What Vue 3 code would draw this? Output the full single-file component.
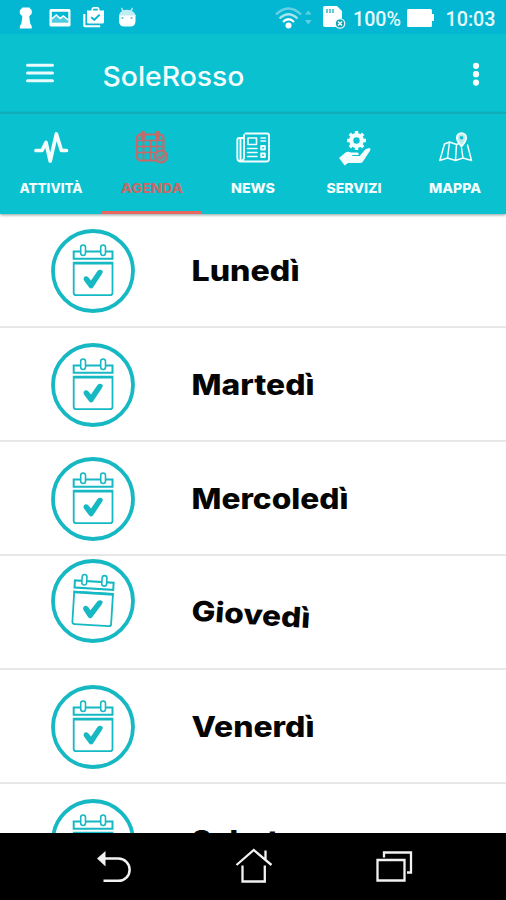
<script setup>
const tabs = [
  { id: 'attivita', label: 'ATTIVITÀ', width: 63 },
  { id: 'agenda', label: 'AGENDA', width: 62 },
  { id: 'news', label: 'NEWS', width: 44 },
  { id: 'servizi', label: 'SERVIZI', width: 55 },
  { id: 'mappa', label: 'MAPPA', width: 52 },
]
const days = [
  { label: 'Lunedì', width: 108 },
  { label: 'Martedì', width: 123 },
  { label: 'Mercoledì', width: 157 },
  { label: 'Giovedì', width: 119, tilted: true },
  { label: 'Venerdì', width: 123 },
  { label: 'Sabato', width: 106 },
]
</script>

<template>
  <div class="screen">
    <header class="status">
      <svg class="status-left" viewBox="0 0 150 34" width="150" height="34">
        <g fill="#fff">
          <path d="M22.500 7.500h7l2.300 3v3l-2.600 3 1 7q1.600 1.500 1.600 5H19.800q0-3.500 1.600-5l1-7-2.600-3v-3Z" />
          <path fill-rule="evenodd" d="M51 9h18q1.500 0 1.500 1.500v14.500q0 1.500-1.500 1.500H51q-1.500 0-1.500-1.500V10.500Q49.500 9 51 9Zm.8 2.700v11h16.500v-11Z" />
          <path d="M51.500 23v-4.500l4.500-4 4 3.500 3-2.500 5.500 4V23Z" opacity=".3" />
          <path d="m51.800 19 4.500-4 4 3.500 3-2.500 5 4" fill="none" stroke="#fff" stroke-width="1.500" />
          <path fill-rule="evenodd" d="M87 10.500h4.500V8.500l1.500-1.500h5l1.500 1.500v2h4.500V22q0 1.500-1.500 1.500H88.500Q87 23.500 87 22Zm6.200 0h4.600V8.800h-4.600Zm-1.500 6-1.200 1.200 3.800 3.500 6-6-1.300-1.200-4.700 4.500Z" />
          <path d="M83.200 14h2.200v11.200h14.800v2H85q-1.800 0-1.800-1.800Z" />
          <path d="M119 15.500h16.500V21q0 5.500-5.500 5.500h-5.500Q119 26.500 119 21Z" />
          <path d="M119 16q.2-3.500 3-5l-1-3 1-.5 1.500 2.800q3.500-1.200 7 0l1.500-2.800 1 .5-1 3q3 1.500 4 5Z" opacity=".75" />
        </g>
        <circle cx="122.500" cy="18" r="1" fill="#43c5dc" />
        <circle cx="131.500" cy="18" r="1" fill="#43c5dc" />
      </svg>
      <svg class="status-right" viewBox="270 0 236 34" width="236" height="34">
        <g fill="none" stroke-width="2.300">
          <path d="M276 14.500q12.500-12 25 0" stroke="#68d0e4" />
          <path d="M279.500 18.500q9-8.500 18 0" stroke="#a9e4ef" />
          <path d="M283 22q5.500-5.500 11 0" stroke="#fff" />
        </g>
        <circle cx="288.500" cy="25.500" r="3" fill="#fff" />
        <path d="M305 14.500l3.300-4 3.300 4Zm0 5.500h6.600l-3.300 4.500Z" fill="#62cfe3" />
        <path d="M325 6h12l5 5v7.500a6 6 0 0 0-5 8.500H325q-2 0-2-2V8q0-2 2-2Z" fill="#fff" />
        <path d="M327 9v4M330 9v4M333 9v4" stroke="#23b4c8" stroke-width="1.400" />
        <circle cx="340" cy="23.500" r="4.700" fill="#0d9fb1" stroke="#e6fafc" stroke-width="1.300" />
        <path d="m338 21.500 4 4m0-4-4 4" stroke="#fff" stroke-width="1.500" />
        <text x="353" y="26" textLength="48" lengthAdjust="spacingAndGlyphs" class="status-text">100%</text>
        <path d="M408.500 9h22q1.500 0 1.500 1.500v3.500h2v7h-2v4.500q0 1.500-1.500 1.500h-22Q407 27 407 25.500v-15Q407 9 408.500 9Z" fill="#fff" />
        <text x="445.500" y="26" textLength="50" lengthAdjust="spacingAndGlyphs" class="status-text">10:03</text>
      </svg>
    </header>

    <div class="appbar">
      <svg class="burger" viewBox="26 61 28 24" width="28" height="24">
        <path d="M27.500 64.300h25M27.500 72h25M27.500 79.700h25" stroke="#e9fbfc" stroke-width="3" stroke-linecap="round" />
      </svg>
      <svg class="title" width="146" height="34" viewBox="0 0 146 34">
        <text x="0.500" y="27" textLength="142" lengthAdjust="spacingAndGlyphs">SoleRosso</text>
      </svg>
      <svg class="more" width="10" height="26" viewBox="0 0 10 26" fill="#fff">
        <circle cx="5" cy="4.800" r="3.100" /><circle cx="5" cy="13.200" r="3.100" /><circle cx="5" cy="21.600" r="3.100" />
      </svg>
    </div>

    <nav class="tabs">
      <div v-for="tab in tabs" :key="tab.id" class="tab" :class="{ active: tab.id === 'agenda' }">
        <svg class="tab-icon" viewBox="0 0 40 40" width="40" height="40" fill="none" stroke="currentColor" stroke-linecap="round" stroke-linejoin="round">
          <path v-if="tab.id === 'attivita'" d="M5 22.500h6l4-8 4.200 18.500 6.200-27 5 16.500H35.500" stroke-width="3.700" />
          <g v-else-if="tab.id === 'agenda'" stroke-width="1.700">
            <rect x="5" y="6.500" width="26.500" height="26" rx="3.500" stroke-width="2.200" />
            <path d="M6 12.500h25M6 18.500h25M6 24.500h18M11.500 12v20M18.300 12v20M25.200 12v12" />
            <path d="M10.800 5v5M25.700 5v5" stroke-width="4.500" />
            <g stroke-width="3"><path d="M11.500 18.500h.1M18.300 18.500h.1M25.200 18.500h.1M11.500 24.500h.1M18.300 24.500h.1" /></g>
            <circle cx="29" cy="28.500" r="6" stroke-width="2" fill="#4aa6aa" />
            <path d="m26.500 29 2.300 1.500 3.400-4" />
          </g>
          <g v-else-if="tab.id === 'news'" stroke-width="1.600">
            <path d="M12.500 5.500h21.500q2 0 2 2v23.500q0 2.500-2.500 2.500H8q-3.700 0-3.700-4V12q0-2 2-2h4M11 7v22q0 4-3.500 4V10" stroke-width="1.900" />
            <path d="M15 10h8.500v6.500H15ZM14.500 20.500h9.500M14.500 24.500h9.500M14.500 28.500h9.500M28 10h4.500M28 13h4.500" />
            <path d="M28.200 18h3.600v3.500h-3.600ZM28.200 25.500h3.600V29h-3.600Z" stroke-width="2" />
          </g>
          <g v-else-if="tab.id === 'servizi'" fill="currentColor" stroke="none">
            <circle cx="22.500" cy="12.500" r="5.300" fill="none" stroke="currentColor" stroke-width="4.200" />
            <path d="M22.500 3v19M13 12.500h19M15.800 5.800l13.400 13.400M29.200 5.800 15.800 19.200" fill="none" stroke="currentColor" stroke-width="3.400" stroke-dasharray="3 12.900 3.100 30" stroke-linecap="butt" />
            <path d="M5 30 11.500 24.500q2.500-1.500 5.500 0h6.500q2.200.8.700 2.500h-6v1h7.500l5.500-6.500 3-1.200h1.800q1.200.8 0 2.500L29 33.500q-1 1.500-3 1.500H14l-3.300 2.500Z" />
          </g>
          <g v-else stroke-width="1.500">
            <path d="M21.500 16.500 14.500 14 9.500 16 4.800 32.500 12.500 30 20.500 32.500 28 30 36.500 32.500 32.500 17M14.500 14 12.500 30M21.500 16.500l-1 16M26.500 20 28 30M21.500 16.500l2.500-1" />
            <path d="M25.800 20.500q-.5-4-3.300-8a4.300 4.300 0 1 1 7 0q-2.200 3.500-3.700 8Z" stroke="none" fill="none" />
            <path d="M26.500 18.500Q21.800 13 21.800 9.800a4.700 4.700 0 0 1 9.400 0q0 3.200-4.700 8.700Z" stroke-width="1.800" fill="#b8ebef" />
            <circle cx="26.500" cy="9.800" r="1.800" fill="#0ac1d0" stroke="none" />
          </g>
        </svg>
        <svg class="tab-label" width="66" height="18" viewBox="0 0 66 18">
          <text :x="33 - tab.width / 2" y="13.500" :textLength="tab.width" lengthAdjust="spacingAndGlyphs">{{ tab.label }}</text>
        </svg>
      </div>
    </nav>

    <main class="list">
      <div v-for="day in days" :key="day.label" class="row" :class="{ tilted: day.tilted }">
        <svg class="day-icon" width="84" height="84" viewBox="0 0 84 84" fill="none" stroke="#16b8c3">
          <circle cx="42" cy="42" r="40" stroke-width="3.800" />
          <g class="calendar">
            <path d="M22.700 22.500h38.800v7.200H22.700Z" stroke-width="2" />
            <rect x="29.700" y="16" width="4.800" height="10.500" rx="2.400" fill="#fff" stroke-width="1.600" />
            <rect x="49.700" y="16" width="4.800" height="10.500" rx="2.400" fill="#fff" stroke-width="1.600" />
            <path d="M22.700 33.700h38.800v30q0 2.500-2.500 2.500H25.200q-2.500 0-2.500-2.500Z" stroke-width="1.800" />
            <path d="M22 34.200h40" stroke-width="2.600" />
            <path d="M33 48.200q2-2 4.500.2l2.500 3L46.500 42q2.500-2.500 5.200 0 .3 1.500-.8 3L42 58.500q-1.800 2-3.800 0L33 51.500q-1-1.600 0-3.300Z" fill="#16b8c3" stroke="none" />
          </g>
        </svg>
        <svg class="day-label" width="170" height="40" viewBox="0 0 170 40">
          <text x="1.500" y="30.300" :textLength="day.width" lengthAdjust="spacingAndGlyphs">{{ day.label }}</text>
        </svg>
      </div>
    </main>

    <footer class="navbar">
      <svg width="40" height="40" viewBox="94 847 40 40" fill="none" stroke="#f2f2f2" stroke-width="2.500">
        <path d="M103 858.500h15.500a11 11 0 0 1 0 22.300h-15" />
        <path d="M97 858.500l8.500-7.500v15.500Z" fill="#f2f2f2" stroke="none" />
      </svg>
      <svg width="40" height="40" viewBox="234 847 40 40" fill="none" stroke="#f2f2f2" stroke-width="2.300">
        <path d="m236.500 865 17.300-15 17.700 15M265.500 850.500v9M242.500 865.500v16h22.300v-16" />
      </svg>
      <svg width="40" height="40" viewBox="374 847 40 40" fill="none" stroke="#f2f2f2" stroke-width="2.300">
        <path d="M377.500 860h27v20.500h-27ZM384 857.500v-5h27v20h-4" />
      </svg>
    </footer>
  </div>
</template>

<style>
body {
  margin: 0;
}
</style>

<style scoped>
.screen {
  width: 506px;
  height: 900px;
  display: flex;
  flex-direction: column;
  overflow: hidden;
  background: #fff;
}
svg {
  display: block;
  flex: none;
}
.status {
  height: 34px;
  flex: none;
  display: flex;
  justify-content: space-between;
  background: #03b7d3;
}
.status-text {
  font: 500 19.500px Roboto, sans-serif;
  fill: #e6fafc;
}
.appbar {
  height: 80px;
  flex: none;
  box-sizing: border-box;
  display: flex;
  align-items: center;
  padding: 0 25px 0 26px;
  background: linear-gradient(#0ac1d0 77px, #04a9b7 79px, #06b4c1);
}
.title {
  margin-left: 48px;
  margin-top: 3px;
}
.title text {
  font: 500 27px Inter, sans-serif;
  fill: #f3fdfd;
}
.more {
  margin-left: auto;
}
.tabs {
  height: 100px;
  flex: none;
  display: flex;
  background: #0ac1d0;
  color: #f3fdfd;
  box-shadow: 0 1px 3px #8b9c9e;
  z-index: 1;
}
.tab {
  flex: 1;
  box-sizing: border-box;
  display: flex;
  flex-direction: column;
  align-items: center;
  padding-top: 14px;
  border-bottom: 3px solid transparent;
}
.tab.active {
  color: #c66a69;
  border-bottom-color: #e76761;
}
.tab-label {
  margin-top: 11px;
}
.tab-label text {
  font: 800 13.500px Inter, sans-serif;
  fill: currentColor;
}
.list {
  flex: 1;
  min-height: 0;
  overflow: hidden;
}
.row {
  height: 114px;
  box-sizing: border-box;
  display: flex;
  align-items: center;
  padding: 1px 0 0 51px;
  border-bottom: 2px solid #e7e7e7;
}
.day-label {
  margin-left: 55px;
}
.day-label text {
  font: 800 28px Inter, sans-serif;
  fill: #050505;
}
.tilted .day-icon {
  margin-bottom: 24px;
}
.tilted .calendar {
  transform: rotate(3.500deg);
  transform-origin: 42px 42px;
}
.tilted .day-label {
  transform: rotate(3.700deg);
  transform-origin: 46px 20px;
}
.navbar {
  height: 67px;
  flex: none;
  display: flex;
  align-items: center;
  gap: 100px;
  padding-left: 94px;
  background: #000;
}
</style>
